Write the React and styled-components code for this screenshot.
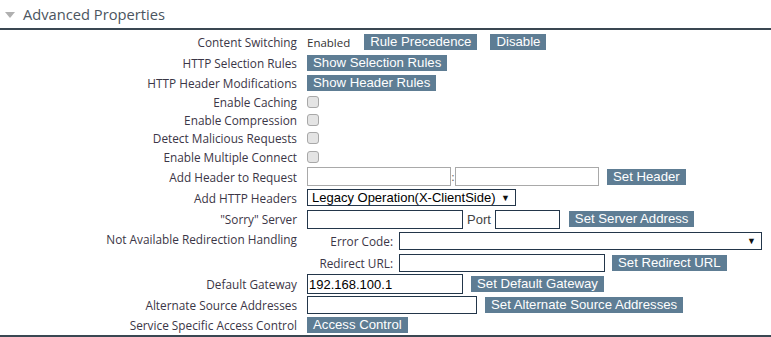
import styled, { createGlobalStyle } from "styled-components";

const GlobalStyle = createGlobalStyle`
  body {
    margin: 0;
    background: #fff;
    font-family: "Open Sans", "DejaVu Sans", sans-serif;
  }
`;

export default function App() {
  return (
    <>
      <GlobalStyle />
      <Panel>
        <Header>
          <Caret />
          <Title>Advanced Properties</Title>
        </Header>
        <Body>
          <Row h={20}>
            <Label>Content Switching</Label>
            <Value>
              <Plain>Enabled</Plain>
              <Button gap={14}>Rule Precedence</Button>
              <Button gap={13}>Disable</Button>
            </Value>
          </Row>
          <Row h={21}>
            <Label>HTTP Selection Rules</Label>
            <Value>
              <Button>Show Selection Rules</Button>
            </Value>
          </Row>
          <Row h={20}>
            <Label>HTTP Header Modifications</Label>
            <Value>
              <Button>Show Header Rules</Button>
            </Value>
          </Row>
          <Row h={18}>
            <Label>Enable Caching</Label>
            <Value>
              <Check />
            </Value>
          </Row>
          <Row h={18}>
            <Label>Enable Compression</Label>
            <Value>
              <Check />
            </Value>
          </Row>
          <Row h={18}>
            <Label>Detect Malicious Requests</Label>
            <Value>
              <Check />
            </Value>
          </Row>
          <Row h={19}>
            <Label>Enable Multiple Connect</Label>
            <Value>
              <Check />
            </Value>
          </Row>
          <Row h={21}>
            <Label>Add Header to Request</Label>
            <Value>
              <Input w={144} h={19} light />
              <Colon>:</Colon>
              <Input w={144} h={19} light />
              <Button gap={8}>Set Header</Button>
            </Value>
          </Row>
          <Row h={21}>
            <Label>Add HTTP Headers</Label>
            <Value>
              <SelectBox w={209} h={17}>
                <span>Legacy Operation(X-ClientSide)</span>
                <Arrow>▼</Arrow>
              </SelectBox>
            </Value>
          </Row>
          <Row h={22}>
            <Label>"Sorry" Server</Label>
            <Value>
              <Input w={156} h={19} />
              <PortText>Port</PortText>
              <Input w={65} h={19} />
              <Button gap={9}>Set Server Address</Button>
            </Value>
          </Row>
          <Block>
            <Label top>Not Available Redirection Handling</Label>
            <SubList>
              <Row h={22}>
                <SubLabel>Error Code:</SubLabel>
                <SelectBox w={363} h={18}>
                  <span />
                  <Arrow>▼</Arrow>
                </SelectBox>
              </Row>
              <Row h={21}>
                <SubLabel>Redirect URL:</SubLabel>
                <Input w={206} h={18} />
                <Button gap={7}>Set Redirect URL</Button>
              </Row>
            </SubList>
          </Block>
          <Row h={22}>
            <Label>Default Gateway</Label>
            <Value>
              <Input w={156} h={20} defaultValue="192.168.100.1" />
              <Button gap={8}>Set Default Gateway</Button>
            </Value>
          </Row>
          <Row h={20}>
            <Label>Alternate Source Addresses</Label>
            <Value>
              <Input w={170} h={18} />
              <Button gap={8}>Set Alternate Source Addresses</Button>
            </Value>
          </Row>
          <Row h={20}>
            <Label>Service Specific Access Control</Label>
            <Value>
              <Button>Access Control</Button>
            </Value>
          </Row>
        </Body>
      </Panel>
    </>
  );
}

const Panel = styled.div`
  width: 771px;
  height: 337px;
  border-bottom: 2px solid #3a4752;
  box-sizing: border-box;
`;

const Header = styled.div`
  height: 28px;
  display: flex;
  align-items: center;
  border-bottom: 2px solid #3a4752;
  padding-left: 5px;
`;

const Caret = styled.span`
  width: 0;
  height: 0;
  border-left: 5px solid transparent;
  border-right: 5px solid transparent;
  border-top: 6px solid #b0b0b0;
  margin-top: 2px;
`;

const Title = styled.span`
  margin-left: 8px;
  font-size: 14.7px;
  color: #4b5560;
`;

const Body = styled.div`
  padding-top: 2px;
  display: flex;
  flex-direction: column;
`;

const Row = styled.div`
  height: ${(p) => p.h}px;
  display: flex;
  align-items: center;
`;

const Block = styled.div`
  display: flex;
  align-items: flex-start;
`;

const Label = styled.div`
  width: 297px;
  flex: none;
  text-align: right;
  font-size: 11.8px;
  color: #3b3646;
  padding-top: ${(p) => (p.top ? "1px" : "0")};
`;

const Value = styled.div`
  margin-left: 10px;
  display: flex;
  align-items: center;
`;

const SubList = styled.div`
  margin-left: 10px;
  display: flex;
  flex-direction: column;
`;

const SubLabel = styled.div`
  width: 86px;
  text-align: right;
  font-size: 11.8px;
  color: #3b3646;
  margin-right: 6px;
`;

const Plain = styled.span`
  font-size: 11.5px;
  color: #333;
`;

const Button = styled.button`
  margin-left: ${(p) => p.gap || 0}px;
  height: 16px;
  padding: 0 6px;
  border: none;
  border-radius: 0;
  background: #5e7d94;
  color: #fff;
  font-family: "Liberation Sans", Arial, sans-serif;
  font-size: 13.2px;
  line-height: 16px;
  white-space: nowrap;
  cursor: pointer;
`;

const Check = styled.span`
  width: 10px;
  height: 10px;
  border: 1px solid #a8a8a8;
  border-radius: 3px;
  background: #e4e4e4;
`;

const Input = styled.input`
  width: ${(p) => p.w}px;
  height: ${(p) => p.h}px;
  box-sizing: border-box;
  border: 1px solid ${(p) => (p.light ? "#a9a9a9" : "#23364a")};
  padding: 0 1px;
  margin: 0;
  font-family: "Liberation Sans", Arial, sans-serif;
  font-size: 13px;
  color: #000;
  outline: none;
`;

const Colon = styled.span`
  width: 4px;
  text-align: center;
  font-size: 11px;
  color: #555;
`;

const PortText = styled.span`
  margin: 0 4px;
  font-family: "Liberation Sans", Arial, sans-serif;
  font-size: 13px;
  color: #444;
`;

const SelectBox = styled.div`
  width: ${(p) => p.w}px;
  height: ${(p) => p.h}px;
  box-sizing: border-box;
  border: 1px solid #23364a;
  display: flex;
  align-items: center;
  justify-content: space-between;
  padding: 0 5px 0 4px;
  font-family: "Liberation Sans", Arial, sans-serif;
  font-size: 13px;
  white-space: nowrap;
  color: #000;
`;

const Arrow = styled.span`
  font-size: 9px;
  color: #111;
`;
